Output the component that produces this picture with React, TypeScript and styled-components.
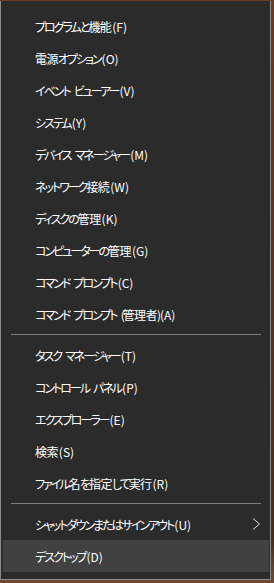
import React from "react";
import styled, { createGlobalStyle } from "styled-components";

const GlobalStyle = createGlobalStyle`
  html, body {
    margin: 0;
    padding: 0;
    background: #5b3322;
    overflow: hidden;
  }
  body {
    font-family: "Noto Sans CJK JP", "Noto Sans", sans-serif;
  }
`;

const Page = styled.div`
  width: 274px;
  height: 583px;
  padding-top: 1px;
  box-sizing: border-box;
  background: linear-gradient(to bottom, #6a3a22 0, #4a2a1c 540px, #6a4a36 580px);
`;

const Menu = styled.nav`
  width: 271px;
  box-sizing: border-box;
  background: #2b2b2b;
  border: 1px solid #8c8c8c;
  border-top: none;
  padding: 9px 0 7px;
  display: flex;
  flex-direction: column;
`;

const Item = styled.div<{ $active?: boolean }>`
  height: 32px;
  margin: 0 1px 0 2px;
  padding: 0 0 0 32px;
  display: flex;
  align-items: center;
  justify-content: space-between;
  background: ${(p) => (p.$active ? "#414141" : "transparent")};
  color: #ffffff;
  font-size: 12px;
  font-feature-settings: "palt";
  white-space: nowrap;
`;

const Label = styled.span`
  display: block;
`;

const Kana = styled.span`
  letter-spacing: -2px;
`;

const Kanji = styled.span`
  letter-spacing: -0.6px;
`;

const Key = styled.span`
  letter-spacing: 0;
  margin-left: 1px;
`;

const Gap = styled.span`
  display: inline-block;
  width: 4px;
`;

const Chevron = styled.svg`
  width: 9px;
  height: 12px;
  margin-right: 8px;
  flex: none;
`;

const Separator = styled.div`
  height: 1px;
  margin: 4px 9px 4px 10px;
  background: #7f7f7f;
`;

type Entry = { label: string; key: string; sub?: boolean; active?: boolean } | "sep";

const entries: Entry[] = [
  { label: "プログラムと機能", key: "F" },
  { label: "電源オプション", key: "O" },
  { label: "イベント ビューアー", key: "V" },
  { label: "システム", key: "Y" },
  { label: "デバイス マネージャー", key: "M" },
  { label: "ネットワーク接続", key: "W" },
  { label: "ディスクの管理", key: "K" },
  { label: "コンピューターの管理", key: "G" },
  { label: "コマンド プロンプト", key: "C" },
  { label: "コマンド プロンプト (管理者)", key: "A" },
  "sep",
  { label: "タスク マネージャー", key: "T" },
  { label: "コントロール パネル", key: "P" },
  { label: "エクスプローラー", key: "E" },
  { label: "検索", key: "S" },
  { label: "ファイル名を指定して実行", key: "R" },
  "sep",
  { label: "シャットダウンまたはサインアウト", key: "U", sub: true },
  { label: "デスクトップ", key: "D", active: true },
];

const kanjiRe = /[\u4e00-\u9fff]/;

function renderRuns(text: string) {
  const runs: { kanji: boolean; s: string }[] = [];
  for (const ch of text) {
    const k = kanjiRe.test(ch);
    const last = runs[runs.length - 1];
    if (last && last.kanji === k) last.s += ch;
    else runs.push({ kanji: k, s: ch });
  }
  return runs.map((r, i) =>
    r.kanji ? <Kanji key={i}>{r.s}</Kanji> : <Kana key={i}>{r.s}</Kana>
  );
}

function renderLabel(text: string) {
  const parts = text.split(" ");
  return parts.map((p, i) => (
    <React.Fragment key={i}>
      {i > 0 && <Gap />}
      {renderRuns(p)}
    </React.Fragment>
  ));
}

export default function App() {
  return (
    <>
      <GlobalStyle />
      <Page>
        <Menu>
          {entries.map((e, i) =>
            e === "sep" ? (
              <Separator key={i} />
            ) : (
              <Item key={i} $active={e.active}>
                <Label>
                  {renderLabel(e.label)}
                  <Key>({e.key})</Key>
                </Label>
                {e.sub && (
                  <Chevron viewBox="0 0 9 12">
                    <path d="M1 0.5 L7.5 6 L1 11.5" fill="none" stroke="#d6dde8" strokeWidth="1" />
                  </Chevron>
                )}
              </Item>
            )
          )}
        </Menu>
      </Page>
    </>
  );
}
